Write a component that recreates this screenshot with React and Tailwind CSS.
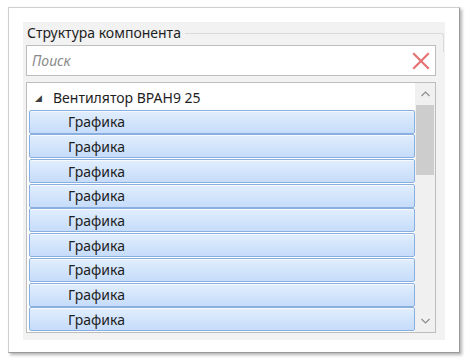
import React from 'react'

const ITEMS = Array.from({ length: 9 }, () => 'Графика')

function ClearIcon() {
  return (
    <svg width="18" height="18" viewBox="0 0 18 18">
      <path d="M2 2 L16 16 M16 2 L2 16" stroke="#e57373" strokeWidth="2.2" strokeLinecap="square" />
    </svg>
  )
}

export default function App() {
  return (
    <div className="w-[472px] h-[363px] bg-white pt-[7px] pl-[8px]" style={{ fontFamily: '"Noto Sans", "Open Sans", sans-serif' }}>
      <div className="w-[452px] h-[346px] bg-white border border-[#cfcfcf] border-r-[#9a9a9a] border-b-[#9a9a9a] shadow-[2px_2px_3px_rgba(0,0,0,0.3)] pt-[14px] pl-[14px]">
        <div className="w-[422px] h-[318px] bg-[#f2f2f2] pl-[3px] pt-[4px]">
          <div className="flex items-center h-[14px] text-[14px] text-[#1e1e1e] leading-none">
            <span className="pl-[1px] pr-[4px]">Структура компонента</span>
            <div className="flex-1 h-[19px] mt-[19px] mr-[1px] border-t border-r border-[#dadada] rounded-tr-[3px]" />
          </div>
          <div className="mt-[5px] w-[410px] h-[31px] bg-white border border-[#bdbdbd] flex items-center pl-[5px] pr-[5px]">
            <span className="flex-1 italic text-[14px] text-[#8a8a8a]">Поиск</span>
            <ClearIcon />
          </div>
          <div className="mt-[6px] w-[410px] h-[251px] bg-white border border-[#bdbdbd] flex overflow-hidden">
            <div className="flex-1 pl-[2px] pt-[3px] flex flex-col gap-[0.7px]">
              <div className="h-[23px] flex items-center text-[14px] text-[#1e1e1e]">
                <span className="ml-[6px] w-[18px] text-[9px] text-[#404040]">◢</span>
                <span>Вентилятор ВРАН9 25</span>
              </div>
              {ITEMS.map((t, i) => (
                <div
                  key={i}
                  className="h-[24px] shrink-0 flex items-center pl-[38px] text-[14px] text-[#1e1e1e] rounded-[2px] border border-[#88afe0] bg-gradient-to-b from-[#e1eefd] to-[#c6dcfa] shadow-[inset_0_1px_0_rgba(255,255,255,0.7)]"
                >
                  {t}
                </div>
              ))}
            </div>
            <div className="w-[20px] bg-[#f0f0f0] flex flex-col items-center">
              <div className="h-[22px] flex items-center justify-center">
                <svg width="9" height="6" viewBox="0 0 9 6"><path d="M0.5 5 L4.5 1 L8.5 5" fill="none" stroke="#8c8c8c" strokeWidth="1.2" /></svg>
              </div>
              <div className="w-[18px] h-[70px] bg-[#cdcdcd]" />
              <div className="flex-1" />
              <div className="h-[22px] flex items-center justify-center">
                <svg width="9" height="6" viewBox="0 0 9 6"><path d="M0.5 1 L4.5 5 L8.5 1" fill="none" stroke="#8c8c8c" strokeWidth="1.2" /></svg>
              </div>
            </div>
          </div>
        </div>
      </div>
    </div>
  )
}
